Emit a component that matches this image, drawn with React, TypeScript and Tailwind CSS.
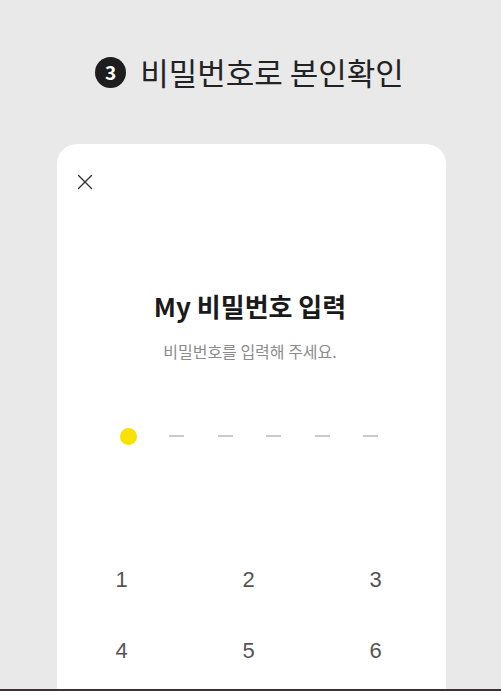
import React from 'react';

const digits = [['1', '2', '3'], ['4', '5', '6']];

export default function App() {
    const filled = 1;

    return (
        <div className="w-[501px] h-[691px] flex flex-col bg-[#e9e9e9] overflow-hidden" style={{ fontFamily: '"Noto Sans CJK KR", "Noto Sans", sans-serif' }}>
            <div className="flex-1 overflow-hidden">
                {/* Step heading */}
                <div className="pt-[52px] h-[92px] flex items-start justify-center">
                    <div className="h-[40px] flex items-center gap-[14px] pr-[2px]">
                        <div className="w-[31px] h-[31px] rounded-full bg-[#1e1e1e] text-white flex items-center justify-center text-[19px] font-bold leading-none pb-[1px]">
                            3
                        </div>
                        <h2 className="text-[31px] leading-[40px] text-[#222] font-normal">비밀번호로 본인확인</h2>
                    </div>
                </div>

                {/* Password card */}
                <div className="ml-[57px] mt-[52px] w-[389px] bg-white rounded-t-[20px] pb-10">
                    <div className="pt-[30px] pl-[20px]">
                        <button className="block w-4 h-4 text-[#333]">
                            <svg viewBox="0 0 16 16" className="w-4 h-4" fill="none" stroke="currentColor" strokeWidth={1.4} strokeLinecap="round">
                                <path d="M1.5 1.5L14.5 14.5M14.5 1.5L1.5 14.5" />
                            </svg>
                        </button>
                    </div>

                    <h1 className="mt-[100px] text-center text-[26px] leading-[32px] font-bold text-[#1a1a1a] pr-[3px]">My 비밀번호 입력</h1>
                    <p className="mt-[19px] text-center text-[16px] leading-[20px] text-[#8c8c8c] pr-[3px]">비밀번호를 입력해 주세요.</p>

                    <div className="mt-[67px] h-4 flex items-center pl-[47px]">
                        {[0, 1, 2, 3, 4, 5].map(i => (
                            <div key={i} className="w-[48.5px] flex items-center justify-center">
                                {i < filled ? (
                                    <div className="w-[17px] h-[17px] rounded-full bg-[#fae100]" />
                                ) : (
                                    <div className="w-[15px] h-[2px] bg-[#cacaca]" />
                                )}
                            </div>
                        ))}
                    </div>

                    <div className="mt-[100px] pl-[1px] pr-[7px]">
                        {digits.map(row => (
                            <div key={row[0]} className="grid grid-cols-3 h-[71px]">
                                {row.map(d => (
                                    <button key={d} className="flex items-center justify-center text-[22px] text-[#555]" style={{ fontFamily: '"Liberation Sans", Arial, sans-serif' }}>
                                        {d}
                                    </button>
                                ))}
                            </div>
                        ))}
                    </div>
                </div>
            </div>
            <div className="h-[2px] bg-[#3b3333]" />
        </div>
    );
}
